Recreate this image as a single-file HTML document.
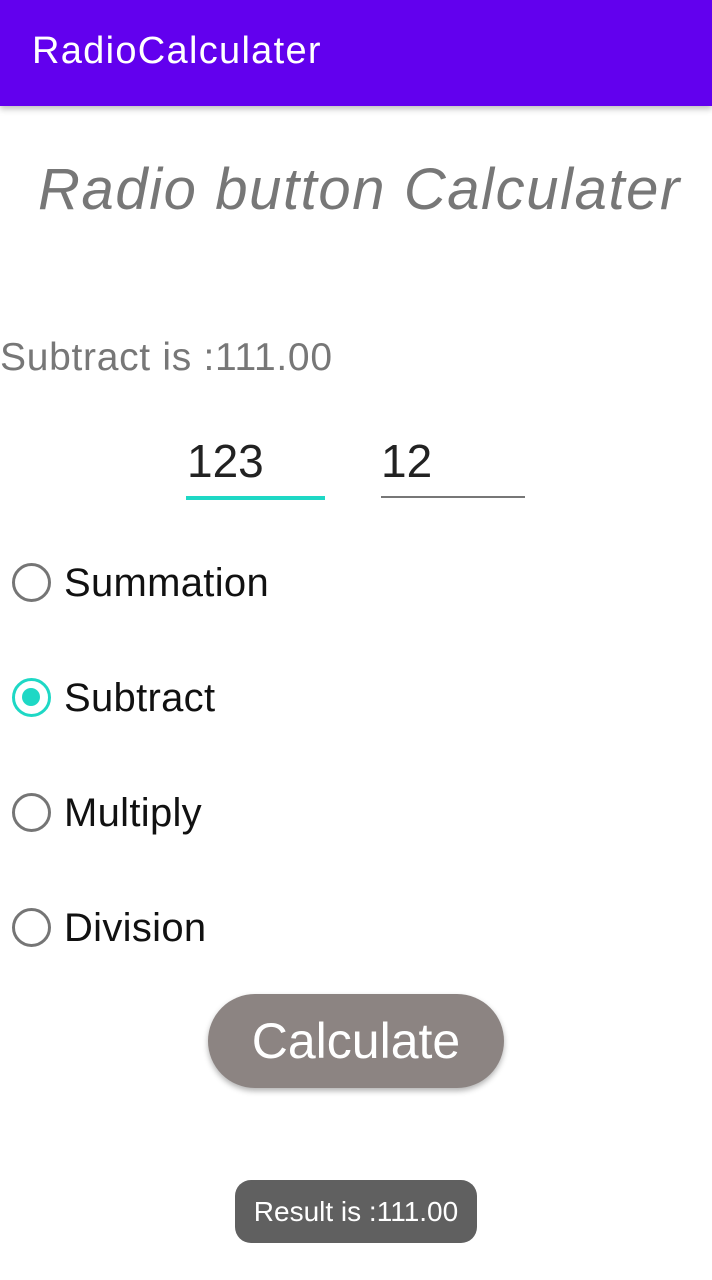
<!DOCTYPE html>
<html><head><style>
body{margin:0;width:712px;height:1280px;background:#fff;font-family:"Liberation Sans",sans-serif;position:relative;overflow:hidden}
.bar{position:absolute;left:0;top:0;width:712px;height:106px;background:#6200ee;box-shadow:0 3px 6px rgba(0,0,0,.25)}
.bar span{position:absolute;left:32px;top:30px;font-size:38px;color:#fff;letter-spacing:1.3px}
.t{position:absolute;white-space:nowrap}
.r{position:absolute;left:12px;width:39px;height:39px;box-sizing:border-box;border:3.5px solid #757575;border-radius:50%}
.r.on{border-color:#1ed8c5}
.r.on:after{content:"";position:absolute;left:7px;top:7px;width:18px;height:18px;border-radius:50%;background:#1ed8c5}
.lab{position:absolute;left:64px;font-size:40px;color:#111;letter-spacing:.3px}
</style></head><body>
<div class="bar"><span>RadioCalculater</span></div>
<div class="t" style="left:38px;top:156px;font-size:58px;font-style:italic;color:#777;letter-spacing:1.6px">Radio button Calculater</div>
<div class="t" style="left:0;top:336px;font-size:39px;color:#777;letter-spacing:.7px">Subtract is :111.00</div>
<div class="t" style="left:187px;top:434px;font-size:46px;color:#222">123</div>
<div style="position:absolute;left:186px;top:496px;width:139px;height:4px;background:#1ed8c5"></div>
<div class="t" style="left:381px;top:434px;font-size:46px;color:#222">12</div>
<div style="position:absolute;left:381px;top:496px;width:144px;height:2px;background:#777"></div>
<div class="r" style="top:563px"></div><div class="lab" style="top:561px">Summation</div>
<div class="r on" style="top:678px"></div><div class="lab" style="top:676px">Subtract</div>
<div class="r" style="top:793px"></div><div class="lab" style="top:791px">Multiply</div>
<div class="r" style="top:908px"></div><div class="lab" style="top:906px">Division</div>
<div style="position:absolute;left:208px;top:994px;width:296px;height:94px;border-radius:47px;background:#8c8482;box-shadow:0 3px 6px rgba(0,0,0,.3);color:#fff;font-size:50px;text-align:center;line-height:94px">Calculate</div>
<div style="position:absolute;left:235px;top:1180px;width:242px;height:63px;border-radius:16px;background:#606060;color:#fff;font-size:28px;text-align:center;line-height:63px">Result is :111.00</div>
</body></html>
